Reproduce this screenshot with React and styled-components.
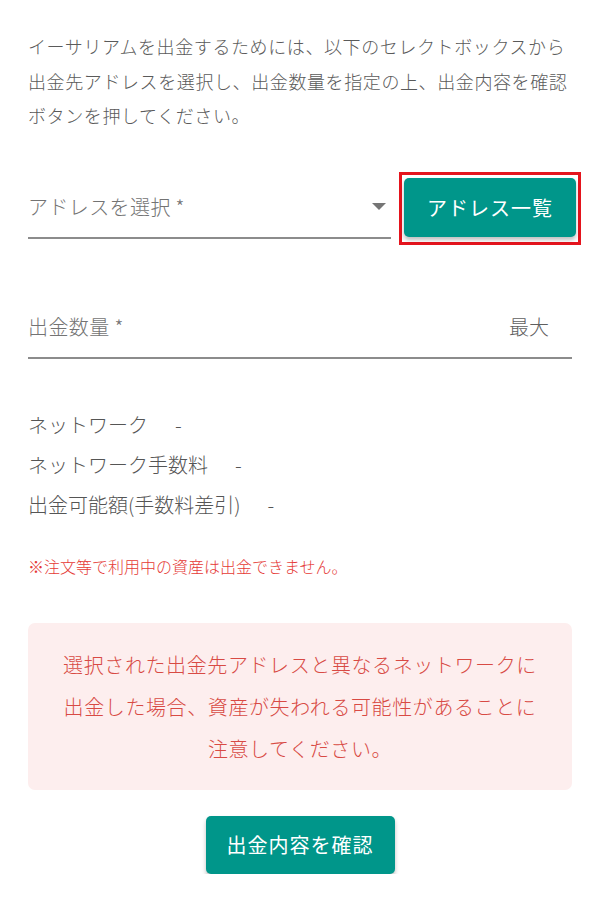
import React from "react";
import styled, { createGlobalStyle } from "styled-components";

const GlobalStyle = createGlobalStyle`
  body {
    margin: 0;
    background: #ffffff;
    font-family: "Noto Sans CJK JP", "Noto Sans", sans-serif;
    text-spacing-trim: space-all;
  }
`;

const Page = styled.div`
  padding: 29px 28px 0 28px;
  width: 600px;
  box-sizing: border-box;
`;

const Intro = styled.p`
  margin: 0;
  font-size: 18px;
  font-weight: 300;
  line-height: 34.5px;
  letter-spacing: 0.6px;
  color: #5a5a5a;
  white-space: nowrap;
`;

const SelectRow = styled.div`
  display: flex;
  align-items: flex-end;
  gap: 8px;
  margin-top: 39px;
  margin-right: -9px;
`;

const Field = styled.div`
  flex: 1;
  display: flex;
  align-items: center;
  justify-content: space-between;
  height: ${(p) => p.h}px;
  padding-top: 5px;
  border-bottom: 2px solid #8c8c8c;
  box-sizing: border-box;
`;

const Placeholder = styled.span`
  font-size: 20px;
  font-weight: 300;
  letter-spacing: 0.4px;
  color: #737373;
`;

const Adornment = styled.span`
  font-size: 20px;
  font-weight: 300;
  color: #5f5f5f;
  margin-right: 23px;
`;

const Arrow = styled.span`
  width: 0;
  height: 0;
  border-left: 7px solid transparent;
  border-right: 7px solid transparent;
  border-top: 7px solid #757575;
  margin-right: 5px;
`;

const Highlight = styled.div`
  border: 3px solid #e5141d;
  padding: 3px 2px 5px;
  margin-bottom: -6px;
  align-self: flex-start;
`;

const Button = styled.button`
  font-family: inherit;
  font-size: 20px;
  font-weight: 400;
  color: #ffffff;
  background: #00968a;
  border: none;
  border-radius: 5px;
  height: ${(p) => p.h}px;
  padding: 0 ${(p) => p.px}px;
  box-shadow: 0 3px 4px rgba(0, 0, 0, 0.25);
  letter-spacing: 1px;
`;

const QtyField = styled(Field)`
  margin-top: 52px;
`;

const Info = styled.div`
  margin-top: 46px;
  display: flex;
  flex-direction: column;
`;

const InfoRow = styled.div`
  display: flex;
  font-size: 20px;
  font-weight: 300;
  line-height: 40px;
  color: #555555;
`;

const InfoValue = styled.span`
  margin-left: 27px;
`;

const Note = styled.p`
  margin: 30px 0 0 0;
  font-size: 16px;
  font-weight: 300;
  line-height: 22px;
  color: #e53935;
`;

const Alert = styled.div`
  margin-top: 46px;
  background: #fdeeee;
  border-radius: 7px;
  padding: 21px 20px 20px;
  text-align: center;
  font-size: 20px;
  font-weight: 300;
  line-height: 42px;
  letter-spacing: 0.6px;
  color: #d84a44;
`;

const Footer = styled.div`
  display: flex;
  justify-content: center;
  margin-top: 26px;
`;

export default function App() {
  return (
    <>
      <GlobalStyle />
      <Page>
        <Intro>
          イーサリアムを出金するためには、以下のセレクトボックスから
          <br />
          出金先アドレスを選択し、出金数量を指定の上、出金内容を確認
          <br />
          ボタンを押してください。
        </Intro>
        <SelectRow>
          <Field h={67}>
            <Placeholder>アドレスを選択 *</Placeholder>
            <Arrow />
          </Field>
          <Highlight>
            <Button h={59} px={23}>
              アドレス一覧
            </Button>
          </Highlight>
        </SelectRow>
        <QtyField h={68}>
          <Placeholder>出金数量 *</Placeholder>
          <Adornment>最大</Adornment>
        </QtyField>
        <Info>
          <InfoRow>
            ネットワーク<InfoValue>-</InfoValue>
          </InfoRow>
          <InfoRow>
            ネットワーク手数料<InfoValue>-</InfoValue>
          </InfoRow>
          <InfoRow>
            出金可能額(手数料差引)<InfoValue>-</InfoValue>
          </InfoRow>
        </Info>
        <Note>※注文等で利用中の資産は出金できません。</Note>
        <Alert>
          選択された出金先アドレスと異なるネットワークに
          <br />
          出金した場合、資産が失われる可能性があることに
          <br />
          注意してください。
        </Alert>
        <Footer>
          <Button h={58} px={21}>
            出金内容を確認
          </Button>
        </Footer>
      </Page>
    </>
  );
}
